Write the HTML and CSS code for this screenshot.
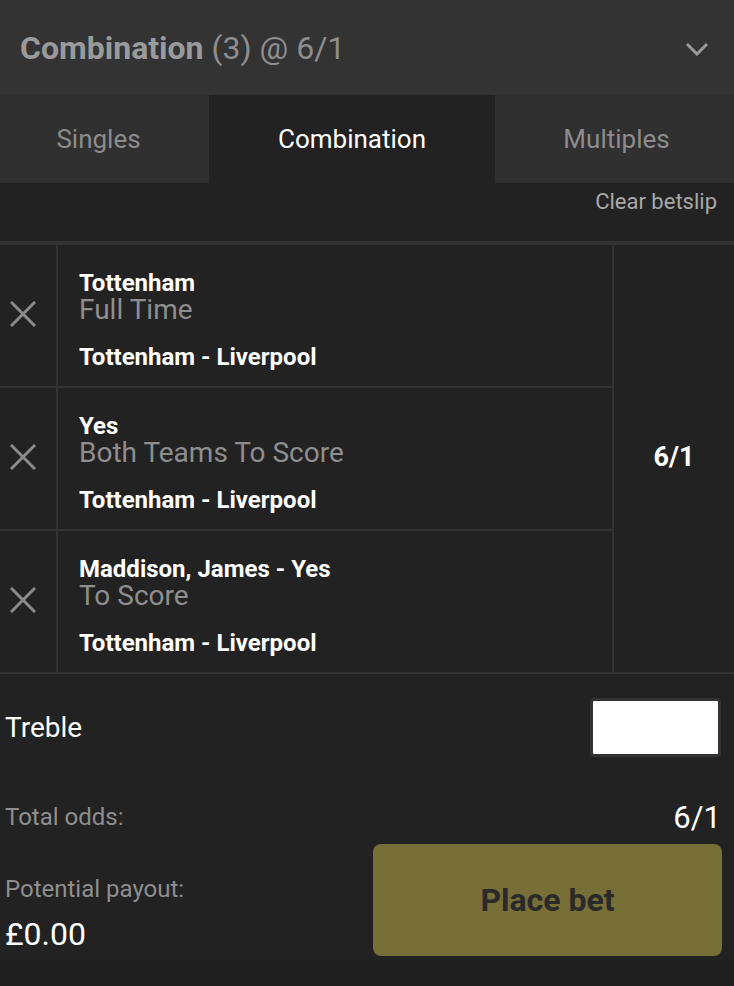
FILE: index.html
```html
<!DOCTYPE html>
<html lang="en">
<head>
    <meta charset="UTF-8">
    <meta name="viewport" content="width=device-width, initial-scale=1.0">
    <title>Betslip</title>
    <link rel="stylesheet" href="styles.css">
</head>
<body>
    <div class="betslip">
        <div class="slip-header">
            <h1><b>Combination</b> (3) @ 6/1</h1>
            <svg class="chevron" width="24" height="14" viewBox="0 0 24 14">
                <path d="M2 2 L12 12 L22 2" fill="none" stroke="#999" stroke-width="3"/>
            </svg>
        </div>

        <div class="tabs">
            <div class="tab first">Singles</div>
            <div class="tab active">Combination</div>
            <div class="tab last">Multiples</div>
        </div>

        <div class="tools">
            <a href="#" class="clear">Clear betslip</a>
        </div>

        <div class="selections">
            <div class="legs">
                <div class="leg">
                    <div class="remove">
                        <svg width="26" height="26" viewBox="0 0 26 26">
                            <path d="M1 1 L25 25 M25 1 L1 25" stroke="#8a8a8a" stroke-width="3"/>
                        </svg>
                    </div>
                    <div class="leg-info">
                        <div class="pick">Tottenham</div>
                        <div class="market">Full Time</div>
                        <div class="event">Tottenham - Liverpool</div>
                    </div>
                </div>
                <div class="leg">
                    <div class="remove">
                        <svg width="26" height="26" viewBox="0 0 26 26">
                            <path d="M1 1 L25 25 M25 1 L1 25" stroke="#8a8a8a" stroke-width="3"/>
                        </svg>
                    </div>
                    <div class="leg-info">
                        <div class="pick">Yes</div>
                        <div class="market">Both Teams To Score</div>
                        <div class="event">Tottenham - Liverpool</div>
                    </div>
                </div>
                <div class="leg">
                    <div class="remove">
                        <svg width="26" height="26" viewBox="0 0 26 26">
                            <path d="M1 1 L25 25 M25 1 L1 25" stroke="#8a8a8a" stroke-width="3"/>
                        </svg>
                    </div>
                    <div class="leg-info">
                        <div class="pick">Maddison, James - Yes</div>
                        <div class="market">To Score</div>
                        <div class="event">Tottenham - Liverpool</div>
                    </div>
                </div>
            </div>
            <div class="combo-odds">6/1</div>
        </div>

        <div class="summary">
            <div class="stake-row">
                <span class="stake-label">Treble</span>
                <input type="text" class="stake-input">
            </div>
            <div class="total-row">
                <span class="muted">Total odds:</span>
                <span class="total-odds">6/1</span>
            </div>
            <div class="place-row">
                <div class="payout">
                    <div class="muted">Potential payout:</div>
                    <div class="payout-value">£0.00</div>
                </div>
                <button class="place-btn">Place bet</button>
            </div>
        </div>
    </div>
</body>
</html>
```

FILE: styles.css
```css
/* Base */
body {
    margin: 0;
    padding: 0;
    font-family: Roboto, "Liberation Sans", Arial, sans-serif;
    background-color: #1f1f1f;
    color: #fff;
}

.betslip {
    width: 734px;
    background-color: #222;
}

/* Header */
.slip-header {
    height: 95px;
    background-color: #333;
    display: flex;
    align-items: center;
    justify-content: space-between;
    padding: 0 25px 0 20px;
    box-sizing: border-box;
}

.slip-header h1 {
    margin: 0;
    font-size: 32px;
    font-weight: 400;
    color: #8e8e8e;
    line-height: 36px;
}

.slip-header h1 b {
    font-weight: 700;
    color: #9a9a9a;
}

.chevron {
    margin-top: 2px;
}

/* Tabs */
.tabs {
    display: grid;
    grid-template-columns: 209px 286px 1fr;
    height: 88px;
    background-color: #303030;
}

.tab {
    display: flex;
    align-items: center;
    justify-content: center;
    font-size: 26px;
    color: #8c8c8c;
}

.tab.first {
    padding-right: 12px;
}

.tab.last {
    padding-left: 4px;
}

.tab.active {
    background-color: #222;
    color: #fff;
}

/* Clear betslip */
.tools {
    height: 58px;
    display: flex;
    justify-content: flex-end;
    align-items: flex-start;
    padding: 7px 17px 0 0;
    box-sizing: border-box;
}

.clear {
    font-size: 22px;
    line-height: 24px;
    color: #a8a8a8;
    text-decoration: none;
}

/* Selections */
.selections {
    display: flex;
    border-top: 4px solid #333;
    border-bottom: 2px solid #333;
}

.legs {
    flex: 1;
    border-right: 2px solid #333;
}

.leg {
    display: flex;
    border-bottom: 2px solid #333;
}

.leg:last-child {
    border-bottom: none;
}

.remove {
    width: 58px;
    border-right: 2px solid #333;
    display: flex;
    align-items: center;
    justify-content: center;
    padding: 0 10px 4px 0;
    box-sizing: border-box;
}

.leg-info {
    padding: 25px 0 15px 21px;
}

.pick {
    font-size: 24px;
    font-weight: 700;
    line-height: 26px;
}

.market {
    font-size: 28px;
    line-height: 28px;
    color: #8e8e8e;
}

.event {
    margin-top: 19px;
    font-size: 24px;
    font-weight: 700;
    line-height: 28px;
}

.combo-odds {
    width: 120px;
    display: flex;
    align-items: center;
    justify-content: center;
    padding-bottom: 4px;
    font-size: 27px;
    font-weight: 700;
}

/* Summary */
.summary {
    padding: 0 12px 4px 5px;
}

.stake-row {
    display: flex;
    justify-content: space-between;
    align-items: center;
    padding-top: 24px;
}

.stake-label {
    font-size: 28px;
}

.stake-input {
    width: 131px;
    height: 59px;
    box-sizing: border-box;
    border: 3px solid #333;
    border-radius: 4px;
    background-color: #fff;
    margin-right: 1px;
}

.total-row {
    display: flex;
    justify-content: space-between;
    align-items: center;
    margin-top: 42px;
    height: 36px;
}

.muted {
    font-size: 24px;
    line-height: 28px;
    color: #8e8e8e;
}

.total-odds {
    font-size: 31px;
    padding-right: 1px;
}

.place-row {
    display: flex;
    justify-content: space-between;
    margin-top: 9px;
}

.payout {
    padding-top: 31px;
}

.payout-value {
    margin-top: 13px;
    font-size: 32px;
    line-height: 36px;
}

.place-btn {
    width: 349px;
    height: 112px;
    background-color: #786f37;
    color: #2a2a2a;
    border: none;
    border-radius: 8px;
    font-family: Roboto, "Liberation Sans", Arial, sans-serif;
    font-size: 32px;
    font-weight: 700;
    cursor: pointer;
}
```
